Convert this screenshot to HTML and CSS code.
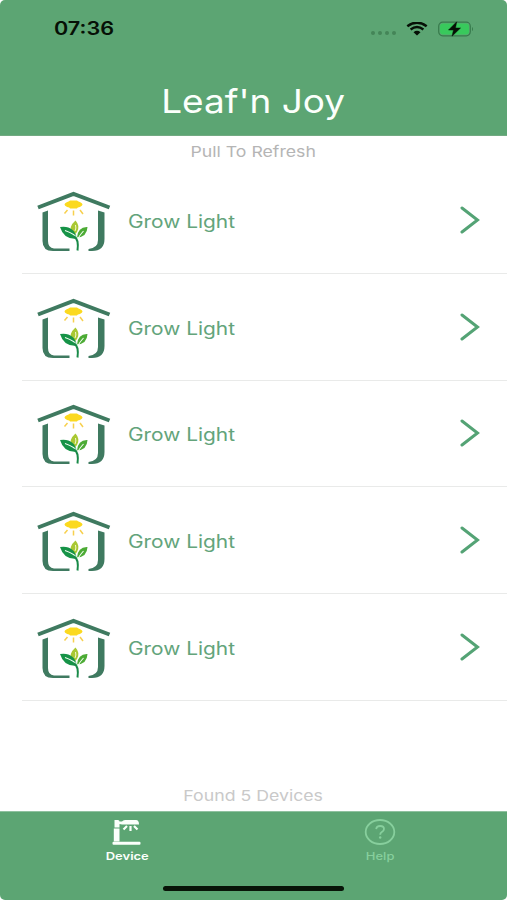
FILE: index.html
```html
<!DOCTYPE html>
<html lang="en">
<head>
<meta charset="utf-8">
<title>Leaf'n Joy</title>
<link rel="stylesheet" href="styles.css">
</head>
<body>
<svg class="defs" aria-hidden="true">
  <symbol id="house" viewBox="0 0 74 62">
    <path d="M1 16.500 36.500 3 72.500 16.500" fill="none" stroke="#3f7a60" stroke-width="4"/>
    <path d="M5.500 21.500 11 19.500V50Q11 57 17 57.500H32.500V60H16Q5.500 60 5.500 50Z" fill="#3f7a60"/>
    <path d="M61 19.500 67.500 21.500V48Q67.500 60 55 60H51.500V58Q61 57 61 49Z" fill="#3f7a60"/>
    <ellipse cx="36.500" cy="13.500" rx="9" ry="3.500" fill="#fbd91f"/>
    <path d="M30 12 33 9.500H40L43 12 40 17.500H33Z" fill="#fbd91f"/>
    <path d="M30.500 19 27.500 22.500M36.500 19.500V24.500M43 19 46 23" fill="none" stroke="#f7d04e" stroke-width="1.500"/>
    <path d="M35 42Q31 36 38.500 29.500 43.500 35 40 41Q38 44 36 43Z" fill="#a9c832"/>
    <path d="M38 40Q39.500 37 38.500 34" fill="none" stroke="#f4f8d0"/>
    <path d="M23 36Q37 34 40 47.500 27 49 23 36Z" fill="#169347"/>
    <path d="M40 46.500Q41 35.500 50.500 36 50 46 40 46.500Z" fill="#4cab35"/>
    <path d="M28 39.500Q38 43 41 48Q42 45 46.500 40" fill="none" stroke="#f4fff4" stroke-width="1.100"/>
    <path d="M37 45.500Q42 48 40.500 59.500" fill="none" stroke="#198a48" stroke-width="2"/>
  </symbol>
  <symbol id="chevron" viewBox="0 0 20 28">
    <path d="M2 2 17.500 14 2 26" fill="none" stroke="#54a375" stroke-width="3" stroke-linecap="round"/>
  </symbol>
</svg>
<div class="screen">
  <header class="top">
    <div class="status">
      <span class="time"><span class="wide">07:36</span></span>
      <span class="indicators">
        <span class="dots"><i></i><i></i><i></i><i></i></span>
        <svg class="wifi" viewBox="0 0 22 14">
          <path d="M1.300 4.300Q11-3 20.700 4.300" fill="none" stroke="#061006" stroke-width="2.500"/>
          <path d="M4.600 7.500Q11 2.500 17.400 7.500" fill="none" stroke="#061006" stroke-width="2.400"/>
          <path d="M7.500 10.200Q11 7.300 14.500 10.200L11 13.500Z" fill="#061006"/>
        </svg>
        <svg class="battery" viewBox="0 0 36 16">
          <rect x=".7" y="1.200" width="31.600" height="13.600" rx="4" fill="none" stroke="#377a4c" stroke-width="1.200"/>
          <rect x="2" y="2.500" width="29" height="11" rx="3" fill="#38c95c"/>
          <path d="M34 5.700Q36 8 34 10.300Z" fill="#377a4c"/>
          <path d="M18.700.8 10.500 9H15.500L14 15.200 22.500 7H17.500Z" fill="#061006" stroke="#061006" stroke-width=".5"/>
        </svg>
      </span>
    </div>
    <h1 class="title"><span class="wide">Leaf'n Joy</span></h1>
  </header>
  <main class="content">
    <p class="refresh"><span class="wide">Pull To Refresh</span></p>
    <ul class="devices">
      <li class="device"><svg class="logo"><use href="#house"/></svg><span class="name wide">Grow Light</span><svg class="chevron"><use href="#chevron"/></svg></li>
      <li class="device"><svg class="logo"><use href="#house"/></svg><span class="name wide">Grow Light</span><svg class="chevron"><use href="#chevron"/></svg></li>
      <li class="device"><svg class="logo"><use href="#house"/></svg><span class="name wide">Grow Light</span><svg class="chevron"><use href="#chevron"/></svg></li>
      <li class="device"><svg class="logo"><use href="#house"/></svg><span class="name wide">Grow Light</span><svg class="chevron"><use href="#chevron"/></svg></li>
      <li class="device"><svg class="logo"><use href="#house"/></svg><span class="name wide">Grow Light</span><svg class="chevron"><use href="#chevron"/></svg></li>
    </ul>
    <p class="found"><span class="wide">Found 5 Devices</span></p>
  </main>
  <footer class="bottom">
    <nav class="tabs">
      <a class="tab active">
        <svg class="tab-icon" viewBox="0 0 32 28">
          <path d="M3.500 2H7Q8.500 2 8.500 3.500H11Q12 2 14 2H25Q28 2 28 6.500H11L8.500 6V9.500H3.500Z" fill="#fbfffb"/>
          <rect x="2.800" y="10.500" width="5.700" height="13" fill="#fbfffb"/>
          <rect x="1.500" y="23.800" width="28" height="3" rx="1" fill="#fbfffb"/>
          <path d="M16 8 12.500 11.500M19.500 8V13M23 8 26.500 11.500" fill="none" stroke="#fbfffb" stroke-width="2.200"/>
        </svg>
        <span class="tab-label wide">Device</span>
      </a>
      <a class="tab">
        <svg class="tab-icon" viewBox="0 0 32 28">
          <ellipse cx="16" cy="14" rx="14.300" ry="12" fill="none" stroke="#87cf9d" stroke-width="1.800"/>
          <path d="M12.200 11.200Q12.500 8 16.200 8 20 8 20 11 20 12.800 17.800 14 16.200 15 16.200 16.700" fill="none" stroke="#87cf9d" stroke-width="1.800"/>
          <circle cx="16.200" cy="19.500" r="1.200" fill="#87cf9d"/>
        </svg>
        <span class="tab-label wide">Help</span>
      </a>
    </nav>
    <div class="home-bar"></div>
  </footer>
</div>
</body>
</html>
```

FILE: styles.css
```css
* { box-sizing: border-box; }
body { margin: 0; background: #fff; font-family: Inter, "Liberation Sans", sans-serif; }
.defs { display: block; width: 0; height: 0; }
.screen { width: 507px; height: 900px; display: flex; flex-direction: column; overflow: hidden; border-radius: 5px; background: #fff; }
.wide { display: inline-block; transform: scaleX(1.18); white-space: nowrap; }
.top { height: 136px; background: #5ca573; border-bottom: 1px solid #72aa82; }
.status { height: 57px; padding: 0 33px 0 54px; display: flex; justify-content: space-between; align-items: center; }
.time { padding-top: 1px; font-size: 18px; font-weight: 600; color: #061006; line-height: 20px; }
.time .wide { transform: scaleX(1.2); transform-origin: left; }
.indicators { display: flex; align-items: center; }
.dots { display: flex; gap: 3px; margin: 9px 10px 0 0; }
.dots i { width: 4px; height: 4px; border-radius: 50%; background: #448558; }
.wifi { width: 22px; height: 14px; margin-right: 10px; }
.battery { width: 36px; height: 16px; }
.title { margin: 0; padding-top: 24px; font-size: 33px; font-weight: 400; line-height: 40px; text-align: center; color: #fbfffb; }
.title .wide { transform: scaleX(1.12); }
.content { flex: 1; display: flex; flex-direction: column; }
.refresh, .found { margin: 0; text-align: center; font-size: 15px; line-height: 20px; }
.refresh { height: 31px; padding-top: 6px; color: #b5b5b5; }
.found { margin-top: auto; padding-bottom: 5px; color: #c9c9c9; }
.devices { margin: 0 0 0 22px; padding: 0; list-style: none; }
.device { height: 106.8px; display: flex; align-items: center; padding: 4px 27px 0 15px; border-bottom: 1px solid #e9eae9; }
.logo { width: 74px; height: 62px; margin-right: 17px; }
.name { flex: 1; transform: scaleX(1.16); transform-origin: left; font-size: 18px; line-height: 24px; color: #63a47b; }
.chevron { width: 20px; height: 28px; margin-bottom: 4px; }
.bottom { height: 89px; background: #5ca573; border-top: 1px solid #8fc19f; display: flex; flex-direction: column; align-items: center; }
.tabs { width: 100%; display: grid; grid-template-columns: 1fr 1fr; }
.tab { display: flex; flex-direction: column; align-items: center; padding-top: 6px; color: #87cf9d; }
.tab.active { color: #fbfffb; }
.tab-icon { width: 32px; height: 28px; }
.tab-label { margin-top: 2px; font-size: 11px; font-weight: 500; line-height: 16px; }
.active .tab-label { font-weight: 600; }
.home-bar { width: 181px; height: 5px; margin-top: 22px; border-radius: 3px; background: #081408; }
```
